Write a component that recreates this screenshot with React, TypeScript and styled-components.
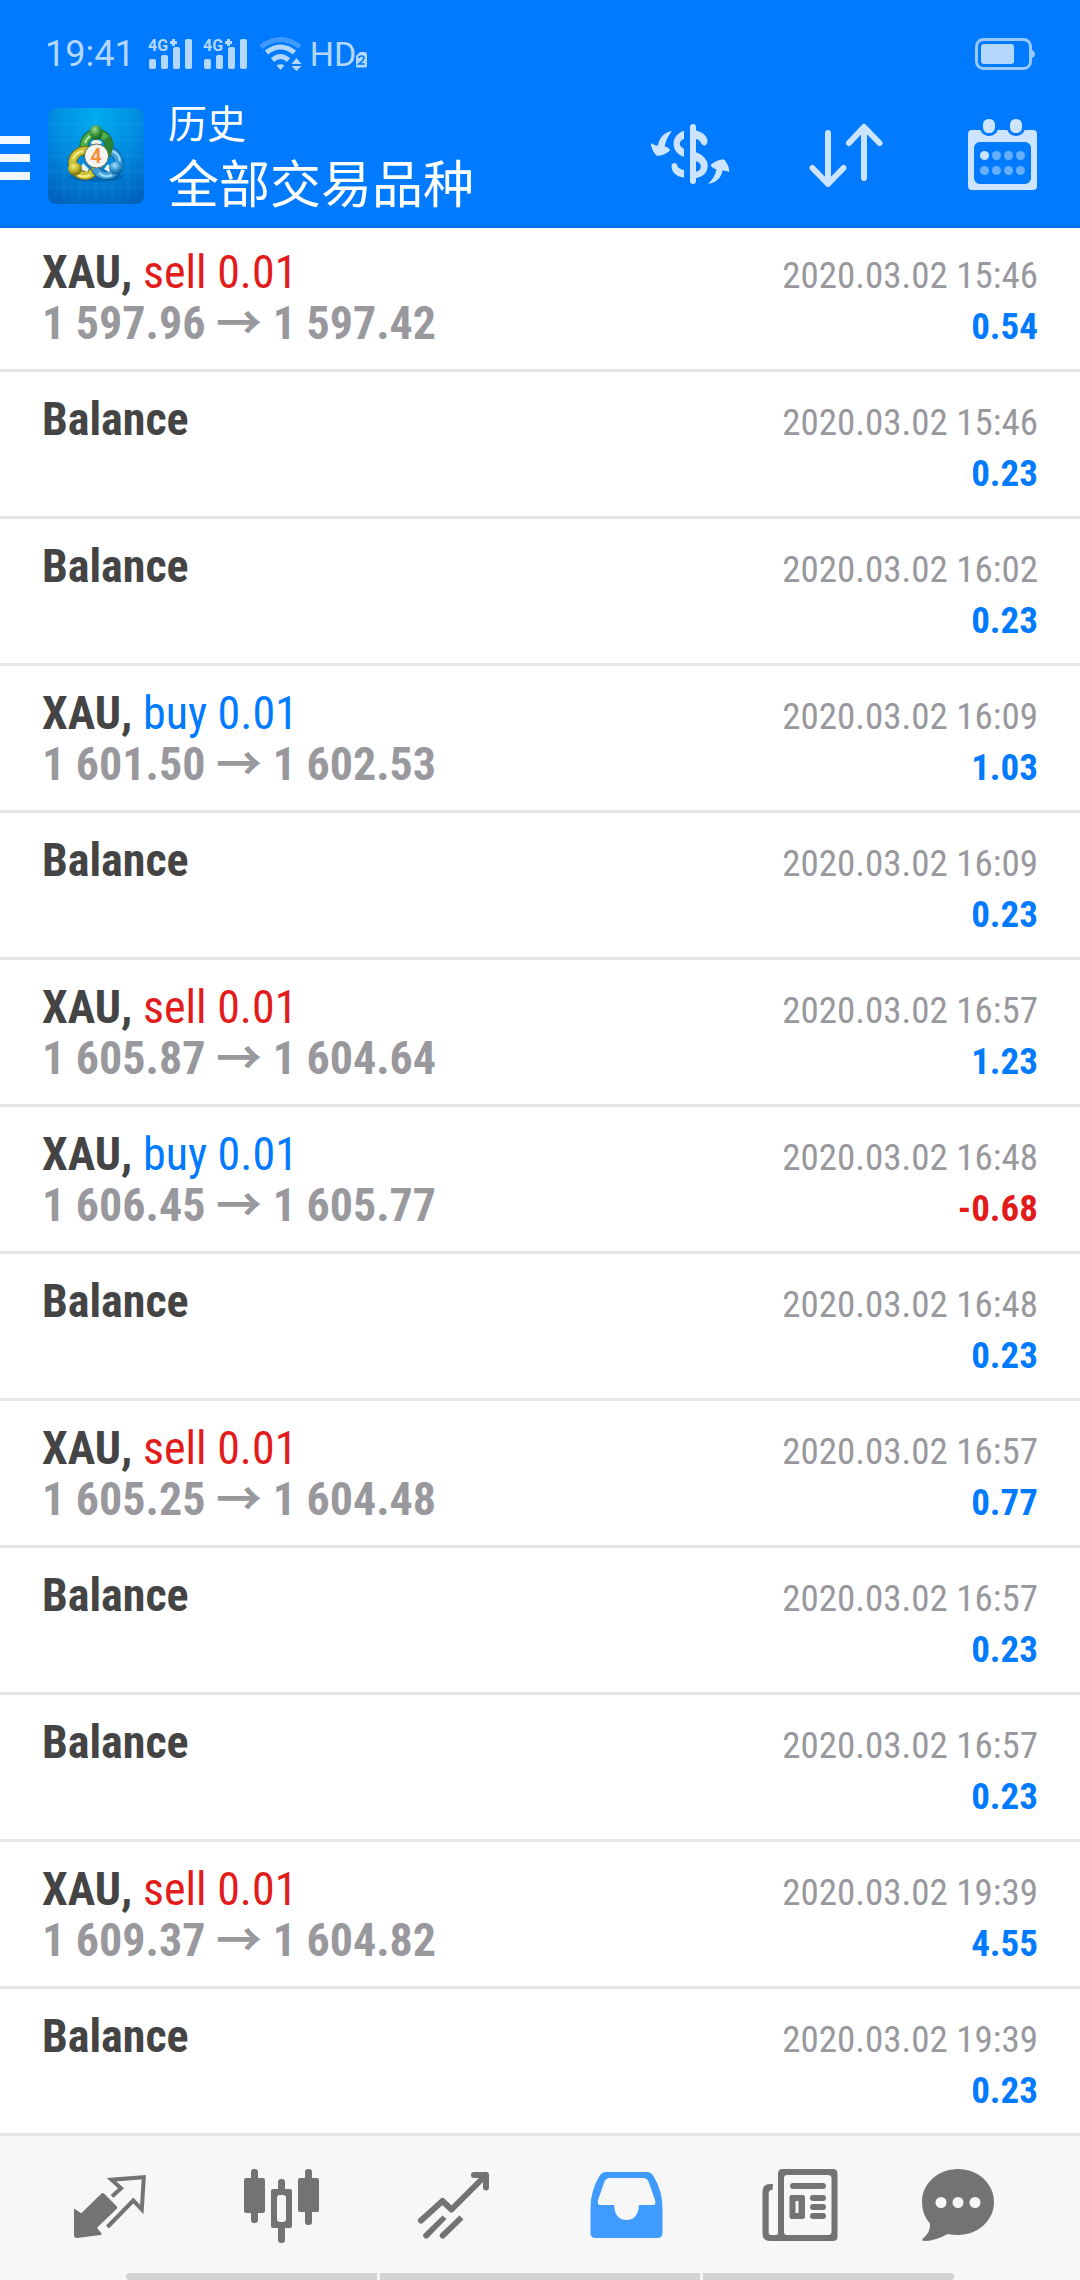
import React from "react";
import styled, { createGlobalStyle } from "styled-components";

const GlobalStyle = createGlobalStyle`
  *, *::before, *::after { box-sizing: border-box; }
  body { margin: 0; background: #ffffff; }
`;

const condensed = `"Roboto Condensed", "Liberation Sans Narrow", Roboto, "Noto Sans CJK SC", sans-serif`;
const regular = `Roboto, "Noto Sans CJK SC", sans-serif`;

const Screen = styled.div`
  display: flex;
  flex-direction: column;
  min-height: 100vh;
  background: #ffffff;
  font-family: ${condensed};
`;

const Header = styled.header`
  background: #007aff;
  border-bottom: 3px solid #0070eb;
`;

const StatusBar = styled.div`
  display: flex;
  align-items: center;
  height: 84px;
  padding: 24px 45px 0;
  color: #b3d7ff;
  font-family: ${regular};
  font-size: 36px;
  line-height: 42px;
`;

const Clock = styled.time`
  margin-right: 13px;
`;

const StatusIcon = styled.svg<{ $gap?: number }>`
  display: block;
  flex: none;
  margin-right: ${(p) => p.$gap ?? 0}px;
  overflow: visible;
`;

const Network = styled.span`
  font-size: 34px;
`;

const Spacer = styled.div`
  flex: 1;
`;

const Toolbar = styled.div`
  display: flex;
  align-items: center;
  height: 141px;
  padding-top: 3px;
`;

const BareButton = styled.button`
  display: flex;
  align-items: center;
  justify-content: center;
  margin: 0;
  padding: 0;
  border: 0;
  background: none;
  cursor: pointer;
`;

const MenuButton = styled(BareButton)`
  flex-direction: column;
  align-items: flex-start;
  gap: 10px;
  width: 48px;
  height: 96px;
  padding-top: 4px;
`;

const MenuBar = styled.span`
  width: 30px;
  height: 8px;
  background: #f0f7ff;
`;

const AppLogo = styled.svg`
  display: block;
  flex: none;
`;

const Titles = styled.div`
  flex: 1;
  padding: 0 0 8px 24px;
  color: #ffffff;
  font-family: "Noto Sans CJK SC", sans-serif;
`;

const Title = styled.h1`
  margin: 0;
  font-size: 39px;
  font-weight: 400;
  line-height: 58px;
`;

const Subtitle = styled.p`
  margin: 0;
  font-size: 51px;
  line-height: 62px;
`;

const ActionButton = styled(BareButton)`
  width: 156px;
  height: 96px;
`;

const Deals = styled.ul`
  flex: 1;
  margin: 0;
  padding: 0;
  list-style: none;
`;

const Deal = styled.li`
  height: 147px;
  padding: 22px 42px 0;
  border-bottom: 3px solid #e5e5e5;

  &:first-child {
    height: 144px;
    padding-top: 19px;
  }
`;

const Line = styled.div`
  display: flex;
  align-items: baseline;
  justify-content: space-between;
  height: 51px;
  font-size: 46px;
  line-height: 51px;
  white-space: pre;
`;

const Symbol = styled.span`
  color: #444444;
  font-weight: 700;
`;

const Side = styled.span<{ $side: "buy" | "sell" }>`
  color: ${(p) => (p.$side === "buy" ? "#007aff" : "#e21b1b")};
  font-weight: 400;
`;

/* The zero-width space keeps the baseline of the line when there are no prices. */
const Prices = styled.span`
  color: #98989d;
  font-weight: 700;

  &::before { content: "\\200b"; }
`;

const Stamp = styled.time`
  color: #98989d;
  font-size: 37px;
  line-height: 39px;
`;

const Profit = styled.span<{ $loss: boolean }>`
  color: ${(p) => (p.$loss ? "#e21b1b" : "#007aff")};
  font-size: 37px;
  font-weight: 700;
  line-height: 39px;
`;

const Footer = styled.footer`
  background: #f7f7f7;
`;

const Tabs = styled.nav`
  display: flex;
  padding: 24px 24px 17px;
`;

const Tab = styled(BareButton)<{ $active?: boolean }>`
  flex: 1;
  height: 96px;
  color: ${(p) => (p.$active ? "#409bff" : "#737373")};
`;

const Glyph = styled.svg`
  display: block;
  overflow: visible;
`;

const GestureBars = styled.div`
  display: grid;
  grid-template-columns: 251fr 320fr 251fr;
  gap: 3px;
  height: 7px;
  padding: 0 126px;
`;

const GestureBar = styled.span`
  background: #d3d3d3;

  &:first-child { border-radius: 4px 0 0 4px; }
  &:last-child { border-radius: 0 4px 4px 0; }
`;

type Record = {
  side?: "buy" | "sell";
  from?: string;
  to?: string;
  time: string;
  profit: string;
};

const records: Record[] = [
  { side: "sell", from: "1 597.96", to: "1 597.42", time: "2020.03.02 15:46", profit: "0.54" },
  { time: "2020.03.02 15:46", profit: "0.23" },
  { time: "2020.03.02 16:02", profit: "0.23" },
  { side: "buy", from: "1 601.50", to: "1 602.53", time: "2020.03.02 16:09", profit: "1.03" },
  { time: "2020.03.02 16:09", profit: "0.23" },
  { side: "sell", from: "1 605.87", to: "1 604.64", time: "2020.03.02 16:57", profit: "1.23" },
  { side: "buy", from: "1 606.45", to: "1 605.77", time: "2020.03.02 16:48", profit: "-0.68" },
  { time: "2020.03.02 16:48", profit: "0.23" },
  { side: "sell", from: "1 605.25", to: "1 604.48", time: "2020.03.02 16:57", profit: "0.77" },
  { time: "2020.03.02 16:57", profit: "0.23" },
  { time: "2020.03.02 16:57", profit: "0.23" },
  { side: "sell", from: "1 609.37", to: "1 604.82", time: "2020.03.02 19:39", profit: "4.55" },
  { time: "2020.03.02 19:39", profit: "0.23" },
];

const Signal = ({ gap }: { gap: number }) => (
  <StatusIcon $gap={gap} width="44" height="32" viewBox="0 0 44 32" fill="#b3d7ff">
    <text x="0" y="13" fontFamily="Roboto, sans-serif" fontSize="16" fontWeight="700">4G</text>
    <path d="M24 1h3v2h2v3h-2v2h-3V6h-2V3h2z" />
    <rect x="1" y="21" width="7" height="10" rx="2" />
    <rect x="13" y="17" width="7" height="14" rx="2" />
    <rect x="25" y="9" width="7" height="22" rx="2" />
    <rect x="37" y="1" width="7" height="30" rx="2" />
  </StatusIcon>
);

const Wifi = () => (
  <StatusIcon $gap={8} width="43" height="34" viewBox="0 0 43 34" fill="none" stroke="#b3d7ff">
    <path d="M2 10Q21.500 -5 41 10" strokeWidth="5" opacity=".35" />
    <path d="M7.500 15.500Q21.500 4.500 35.500 15.500" strokeWidth="5" />
    <path d="M13.500 23Q21.500 16 29.500 23" strokeWidth="5" />
    <path d="M17.500 28.500Q21.500 26 25.500 28.500L21.500 33Z" fill="#b3d7ff" stroke="none" />
    <path d="M37.500 21l5 6h-10zM37.500 34l5-5h-10z" fill="#b3d7ff" stroke="none" />
  </StatusIcon>
);

const SimBadge = () => (
  <StatusIcon width="11" height="30" viewBox="0 0 11 30">
    <path d="M4 13h5a2 2 0 0 1 2 2v12a1.500 1.500 0 0 1-1.500 1.500H1.500A1.500 1.500 0 0 1 0 27V17z" fill="#b3d7ff" />
    <path d="M3 19Q3 17 5.500 17T8 19Q8 20.500 3 25H8.500" fill="none" stroke="#007aff" strokeWidth="1.700" />
  </StatusIcon>
);

const Battery = () => (
  <StatusIcon width="60" height="32" viewBox="0 0 60 32" fill="#b3d7ff">
    <rect x="1.500" y="1.500" width="54" height="29" rx="7" fill="none" stroke="#99caff" strokeWidth="3" />
    <rect x="6" y="6" width="33" height="20" rx="3" />
    <path d="M57 12q3 1 3 4t-3 4z" fill="#99caff" />
  </StatusIcon>
);

const Logo = () => (
  <AppLogo width="96" height="96" viewBox="0 0 96 96" role="img" aria-label="MetaTrader 4">
    <defs>
      <radialGradient id="sky" cx=".5" cy=".1" r=".95">
        <stop offset="0" stopColor="#00adee" />
        <stop offset=".5" stopColor="#008ae0" />
        <stop offset="1" stopColor="#0064bc" />
      </radialGradient>
      <radialGradient id="green" cx=".4" cy=".3" r=".7">
        <stop offset="0" stopColor="#a2dd95" />
        <stop offset=".5" stopColor="#439b43" />
        <stop offset="1" stopColor="#17601d" />
      </radialGradient>
      <radialGradient id="yellow" cx=".4" cy=".3" r=".7">
        <stop offset="0" stopColor="#f5ed83" />
        <stop offset=".5" stopColor="#c2b52a" />
        <stop offset="1" stopColor="#6e6710" />
      </radialGradient>
      <radialGradient id="blue" cx=".4" cy=".3" r=".7">
        <stop offset="0" stopColor="#a9e0fb" />
        <stop offset=".5" stopColor="#3a9bd6" />
        <stop offset="1" stopColor="#0c5796" />
      </radialGradient>
    </defs>
    <rect width="96" height="96" rx="8" fill="url(#sky)" />
    <path
      d="M16 0v96M32 0v96M48 0v96M64 0v96M80 0v96M0 16h96M0 32h96M0 48h96M0 64h96M0 80h96"
      stroke="#5cc8ff" strokeOpacity=".14" strokeWidth="1"
    />
    <ellipse cx="48" cy="69" rx="27" ry="5" fill="#003b78" opacity=".3" />
    <g fill="none">
      <circle cx="48.500" cy="38" r="12.500" stroke="#1d6a22" strokeWidth="9" />
      <circle cx="48.500" cy="38" r="12.500" stroke="#4fae4c" strokeWidth="7" />
      <path d="M37 35a12 12 0 0 1 8-8" stroke="#b7e8ad" strokeWidth="2" />
      <circle cx="37" cy="55" r="12.500" stroke="#77700f" strokeWidth="9" />
      <circle cx="37" cy="55" r="12.500" stroke="#cec238" strokeWidth="7" />
      <path d="M25 51a13 13 0 0 1 10-8M30 67a13 13 0 0 0 12 0" stroke="#f6ee8e" strokeWidth="2" />
      <path d="M47 60a12.500 12.500 0 1 0 15-17" stroke="#0d5a98" strokeWidth="9" />
      <path d="M47 60a12.500 12.500 0 1 0 15-17" stroke="#3f9fd9" strokeWidth="7" />
      <path d="M51 65a12 12 0 0 0 13 2M64 43a13 13 0 0 1 8 10" stroke="#9bd8f7" strokeWidth="2" />
      <path d="M58.500 30a14 14 0 0 1 0 17" stroke="#2c8432" strokeWidth="7" />
    </g>
    <path d="M43 34l5-3 6 3-3 5h-6zM32 61l3-6 6 6-2 3zM56 61l4-5 4 5-3 3z" fill="#f2f6e8" />
    <ellipse cx="48" cy="24.500" rx="6.500" ry="7.500" fill="url(#green)" />
    <ellipse cx="27" cy="61" rx="7" ry="6.500" fill="url(#yellow)" />
    <ellipse cx="68" cy="60" rx="7" ry="6.500" fill="url(#blue)" />
    <circle cx="48.500" cy="48" r="12" fill="#f4f4f4" stroke="#5a6c46" strokeWidth="1" />
    <text x="48" y="55" textAnchor="middle" fontFamily="Roboto, sans-serif" fontSize="20" fontWeight="700" fill="#f2903c">4</text>
  </AppLogo>
);

const CurrencyIcon = () => (
  <Glyph width="96" height="96" viewBox="0 0 96 96" fill="#cce4ff">
    <rect x="48" y="16" width="6" height="60" rx="3" />
    <path d="M42 22.700C35 25 31.600 30 31.600 36S36 47 42 49V40.700C39.500 39.500 37.800 38 37.800 35.800S39.500 31.800 42 31Z" />
    <path d="M29.500 58C29.500 54 35.400 54 35.400 58C36 60 39 61.500 42 62V69.700C34 68.500 29.500 64 29.500 58Z" />
    <path d="M54 22.500C61 24 65.500 28.500 65.500 33C65.500 38.500 60.500 38.500 59 35C58 32.500 56.500 31.500 54 31Z" />
    <path d="M54 44.300C61 47 65.700 51.500 65.700 57.700C65.700 64 61 69 54 70V63.700C57 63 58.800 61.500 58.800 58.700C58.800 55.500 57 54 54 53.300Z" />
    <path d="M30 23C22 24.500 17 30 16 37.500C13.500 37.500 11.500 36.700 9.500 35.200C8.500 35.500 9 37 9.500 39C11 43 12.500 46 14.500 47.500C19 48.500 24 46 28 42.500C28 41 25.500 39 22.700 38.500C23.500 33 26 28 30 23Z" />
    <path d="M66 76C74.500 74.500 79.500 69.500 80.500 62.500C83 62.500 85 63 87 64C88 62 86 56 82.500 51.700C78 50.500 72.500 53.500 68.500 57C69.500 59.500 72 60.500 74.500 61.500C73.500 67 70.500 72 66 76Z" />
  </Glyph>
);

const SortIcon = () => (
  <Glyph width="96" height="96" viewBox="0 0 96 96" fill="none" stroke="#cce4ff" strokeWidth="6" strokeLinecap="round" strokeLinejoin="round">
    <path d="M30 25V75M14.500 60L30 76L45.500 60M66 70V20M51 35L66 19L81.500 35" />
  </Glyph>
);

const CalendarIcon = () => (
  <Glyph width="96" height="96" viewBox="0 0 96 96" fill="#cce4ff">
    <path fillRule="evenodd" d="M18 22H79a4 4 0 0 1 4 4V78a4 4 0 0 1-4 4H18a4 4 0 0 1-4-4V26a4 4 0 0 1 4-4ZM26 34a6 6 0 0 0-6 6V70a6 6 0 0 0 6 6H71a6 6 0 0 0 6-6V40a6 6 0 0 0-6-6Z" />
    <rect x="27.500" y="9.500" width="15" height="17" rx="7" stroke="#007aff" strokeWidth="3" />
    <rect x="54.500" y="9.500" width="15" height="17" rx="7" stroke="#007aff" strokeWidth="3" />
    <circle cx="30.500" cy="47.500" r="4.500" />
    <g fill="#66afff">
      {[42.5, 54.5, 66.5].map((x) => (
        <circle key={x} cx={x} cy="47.500" r="4.500" />
      ))}
      {[30.5, 42.5, 54.5, 66.5].map((x) => (
        <circle key={x} cx={x} cy="62.500" r="4.500" />
      ))}
    </g>
  </Glyph>
);

const QuotesIcon = () => (
  <Glyph width="96" height="96" viewBox="0 0 96 96" fill="currentColor">
    <path d="M12 48.500L19.300 53.300L39 34Q40.700 32 42.500 34L54.500 46Q56 47.500 54.500 49L35 67.700L39.500 73.500Q40 75 38.500 75L15 78Q12 78 12 75Z" />
    <path d="M45.500 67L71.300 40.500L79.800 49.500L81.800 17.200L49.500 19.700L59 28.300L50 36.500" fill="none" stroke="currentColor" strokeWidth="4" />
  </Glyph>
);

const CandlesIcon = () => (
  <Glyph width="96" height="96" viewBox="0 0 96 96" fill="currentColor">
    <rect x="10" y="18" width="21" height="35" rx="2" />
    <rect x="17" y="9" width="7" height="54" rx="3" />
    <rect x="44" y="19" width="7" height="64" rx="3" />
    <rect x="37" y="29" width="21" height="39" rx="2" />
    <rect x="43" y="35" width="9" height="27" rx="3" fill="#f7f7f7" />
    <rect x="64" y="18" width="21" height="34" rx="2" />
    <rect x="71" y="9" width="7" height="56" rx="3" />
  </Glyph>
);

const TradeIcon = () => (
  <Glyph width="96" height="96" viewBox="0 0 96 96" fill="currentColor">
    <g fill="none" stroke="currentColor" strokeWidth="6" strokeLinecap="round" strokeLinejoin="round">
      <path d="M15 60.500L36.500 41L45.500 49.500L80 15M68 15H80V27.500" />
    </g>
    <path d="M36.500 55.500L40.500 59L22.500 77.500A3 3 0 0 1 18 73.500ZM53.500 55.500L57.500 59.500L39 77.500A3 3 0 0 1 34.500 73.500Z" />
  </Glyph>
);

const HistoryIcon = () => (
  <Glyph width="96" height="96" viewBox="0 0 96 96" fill="currentColor">
    <path fillRule="evenodd" d="M28 12H69Q73 12 75.500 16Q84.500 31 84.500 48V73Q84.500 78 79.500 78H17.500Q12.500 78 12.500 73V48Q12.500 31 21.500 16Q24 12 28 12ZM32 18Q28 18 26.500 21.500L20 40Q19 45 22 45H36Q37 60 48.500 60T61 45H75Q78.500 45 77 40L70.500 21.500Q69 18 65 18Z" />
  </Glyph>
);

const NewsIcon = () => (
  <Glyph width="96" height="96" viewBox="0 0 96 96" fill="currentColor">
    <path fillRule="evenodd" d="M32.500 9H83Q87.500 9 87.500 13.500V76.500Q87.500 81 83 81H20Q12.500 81 12.500 73.500V31.500Q12.500 24 20 24H23L22.500 29.700Q18.700 29.700 18.700 33.500V72.500Q18.700 75 21.200 75H25.500Q28 75 28 72.500V13.500Q28 9 32.500 9ZM37 15Q34 15 34 18V72Q34 75 37 75H78Q81.500 75 81.500 72V18Q81.500 15 78 15Z" />
    <rect x="40" y="23" width="36" height="6" rx="3" />
    <path fillRule="evenodd" d="M41.500 35H52.500Q55 35 55 37V57Q55 59 52.500 59H41.500Q39.500 59 39.500 57V37Q39.500 35 41.500 35ZM45.500 41V53H48.500V41Z" />
    <rect x="60" y="35" width="16" height="6" rx="3" />
    <rect x="60" y="44" width="16" height="6" rx="3" />
    <rect x="60" y="53" width="16" height="6" rx="3" />
  </Glyph>
);

const ChatIcon = () => (
  <Glyph width="96" height="96" viewBox="0 0 96 96" fill="currentColor">
    <path d="M36 9C56 9 72 23.500 72 42S56 75 36 75Q31 75 25.700 74Q14 80.500 3 81Q-1 81 1 78.500Q8.500 72.500 8 63.500Q0 55 0 42C0 23.500 16 9 36 9Z" />
    <g fill="#f7f7f7">
      <circle cx="19" cy="42.500" r="5.500" />
      <circle cx="36" cy="42.500" r="5.500" />
      <circle cx="53" cy="42.500" r="5.500" />
    </g>
  </Glyph>
);

const actions = [
  { label: "交易品种", Icon: CurrencyIcon },
  { label: "排序", Icon: SortIcon },
  { label: "时期", Icon: CalendarIcon },
];

const tabs = [
  { label: "行情", Icon: QuotesIcon },
  { label: "图表", Icon: CandlesIcon },
  { label: "交易", Icon: TradeIcon },
  { label: "历史", Icon: HistoryIcon, active: true },
  { label: "新闻", Icon: NewsIcon },
  { label: "消息", Icon: ChatIcon },
];

export default function App() {
  return (
    <Screen>
      <GlobalStyle />
      <Header>
        <StatusBar>
          <Clock>19:41</Clock>
          <Signal gap={11} />
          <Signal gap={12} />
          <Wifi />
          <Network>HD</Network>
          <SimBadge />
          <Spacer />
          <Battery />
        </StatusBar>
        <Toolbar>
          <MenuButton aria-label="菜单">
            <MenuBar />
            <MenuBar />
            <MenuBar />
          </MenuButton>
          <Logo />
          <Titles>
            <Title>历史</Title>
            <Subtitle>全部交易品种</Subtitle>
          </Titles>
          {actions.map(({ label, Icon }) => (
            <ActionButton key={label} aria-label={label}>
              <Icon />
            </ActionButton>
          ))}
        </Toolbar>
      </Header>
      <Deals>
        {records.map((r, i) => (
          <Deal key={i}>
            <Line>
              {r.side ? (
                <span>
                  <Symbol>XAU, </Symbol>
                  <Side $side={r.side}>{r.side} 0.01</Side>
                </span>
              ) : (
                <Symbol>Balance</Symbol>
              )}
              <Stamp>{r.time}</Stamp>
            </Line>
            <Line>
              <Prices>{r.from ? `${r.from} → ${r.to}` : ""}</Prices>
              <Profit $loss={r.profit.startsWith("-")}>{r.profit}</Profit>
            </Line>
          </Deal>
        ))}
      </Deals>
      <Footer>
        <Tabs>
          {tabs.map(({ label, Icon, active }) => (
            <Tab key={label} aria-label={label} $active={active}>
              <Icon />
            </Tab>
          ))}
        </Tabs>
        <GestureBars>
          <GestureBar />
          <GestureBar />
          <GestureBar />
        </GestureBars>
      </Footer>
    </Screen>
  );
}
